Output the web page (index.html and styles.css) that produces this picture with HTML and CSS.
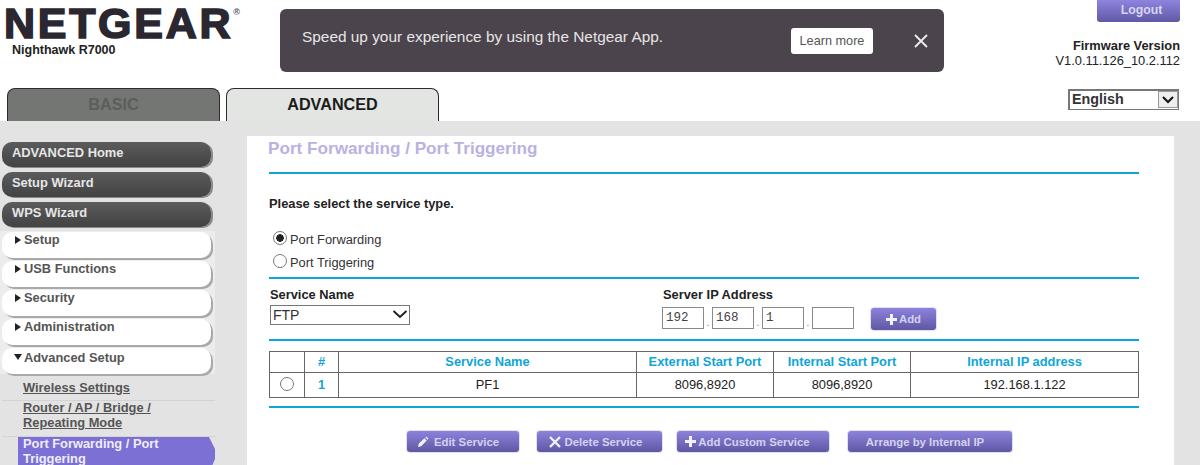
FILE: index.html
```html
<!DOCTYPE html>
<html lang="en">
<head>
<meta charset="utf-8">
<title>NETGEAR Router R7000</title>
<link rel="stylesheet" href="styles.css">
</head>
<body>
<header class="header">
  <div class="header-left">
    <div class="header-top">
      <div class="brand">
        <div class="logo">NETGEAR<span class="reg">®</span></div>
        <div class="model">Nighthawk R7000</div>
      </div>
      <div class="banner">
        <span class="banner-text">Speed up your experience by using the Netgear App.</span>
        <a class="learn">Learn more</a>
        <svg class="banner-x" width="14" height="14" viewBox="0 0 14 14"><path d="M1 1 13 13M13 1 1 13" stroke="#eeeeee" stroke-width="1.8" fill="none"/></svg>
      </div>
    </div>
    <nav class="tabs">
      <a class="tab tab-basic">BASIC</a>
      <a class="tab tab-advanced">ADVANCED</a>
    </nav>
  </div>
  <div class="header-right">
    <a class="logout">Logout</a>
    <div class="firmware"><b>Firmware Version</b><br>V1.0.11.126_10.2.112</div>
    <div class="lang">
      <select class="lang-select"><option>English</option></select>
      <svg class="lang-arrow" width="20" height="17" viewBox="0 0 20 17"><rect x="0.5" y="0.5" width="19" height="16" fill="#eeeeee" stroke="#999999"/><path d="M5 6 10 11 15 6" stroke="#111111" stroke-width="2" fill="none"/></svg>
    </div>
  </div>
</header>
<div class="shell">
  <aside class="sidebar">
    <a class="pill pill-dark">ADVANCED Home</a>
    <a class="pill pill-dark">Setup Wizard</a>
    <a class="pill pill-dark">WPS Wizard</a>
    <div class="light-group">
      <a class="pill pill-light"><i class="tri"></i>Setup</a>
      <a class="pill pill-light"><i class="tri"></i>USB Functions</a>
      <a class="pill pill-light"><i class="tri"></i>Security</a>
      <a class="pill pill-light"><i class="tri"></i>Administration</a>
      <a class="pill pill-light pill-open"><i class="tri tri-down"></i>Advanced Setup</a>
    </div>
    <a class="sub sub-one">Wireless Settings</a>
    <a class="sub sub-two">Router / AP / Bridge / Repeating Mode</a>
    <a class="sub-active">Port Forwarding / Port Triggering</a>
  </aside>
  <main class="panel">
    <h1 class="title">Port Forwarding / Port Triggering</h1>
    <div class="rule"></div>
    <p class="prompt">Please select the service type.</p>
    <label class="radio-row"><input class="radio" type="radio" name="t" checked>Port Forwarding</label>
    <label class="radio-row"><input class="radio" type="radio" name="t">Port Triggering</label>
    <div class="rule rule-b"></div>
    <div class="form-row">
      <div>
        <div class="field-label">Service Name</div>
        <div class="svc">
          <select class="svc-select"><option>FTP</option></select>
          <svg class="svc-arrow" width="16" height="9" viewBox="0 0 16 9"><path d="M1.5 1 8 7 14.5 1" stroke="#222222" stroke-width="2" fill="none"/></svg>
        </div>
      </div>
      <div>
        <div class="field-label">Server IP Address</div>
        <div class="ip-row">
          <input class="ip" value="192"><span class="dot">.</span>
          <input class="ip" value="168"><span class="dot">.</span>
          <input class="ip" value="1"><span class="dot">.</span>
          <input class="ip" value="">
          <a class="btn btn-add"><svg width="11" height="11" viewBox="0 0 11 11"><path d="M5.500 0v11M0 5.500h11" stroke="#f2f0fb" stroke-width="3"/></svg>Add</a>
        </div>
      </div>
    </div>
    <div class="rule rule-c"></div>
    <table class="grid">
      <colgroup>
        <col class="c1"><col class="c2"><col class="c3"><col class="c4"><col class="c5"><col>
      </colgroup>
      <tr class="head"><th></th><th>#</th><th>Service Name</th><th>External Start Port</th><th>Internal Start Port</th><th>Internal IP address</th></tr>
      <tr class="row"><td><input class="radio radio-table" type="radio" name="r"></td><td class="num">1</td><td>PF1</td><td>8096,8920</td><td>8096,8920</td><td>192.168.1.122</td></tr>
    </table>
    <div class="rule rule-d"></div>
    <div class="actions">
      <a class="btn btn-edit"><svg width="12" height="12" viewBox="0 0 13 13"><path d="M1 12 2 8 8 2.500 10.500 5 4.500 11ZM9 1.500 10 .5 12.500 3 11.500 4Z" fill="#f2f0fb"/></svg>Edit Service</a>
      <a class="btn btn-del"><svg width="12" height="12" viewBox="0 0 12 12"><path d="M1 1 11 11M11 1 1 11" stroke="#f2f0fb" stroke-width="2.400"/></svg>Delete Service</a>
      <a class="btn btn-custom"><svg width="11" height="11" viewBox="0 0 11 11"><path d="M5.500 0v11M0 5.500h11" stroke="#f2f0fb" stroke-width="3"/></svg>Add Custom Service</a>
      <a class="btn btn-arrange">Arrange by Internal IP</a>
    </div>
  </main>
</div>
</body>
</html>
```
FILE: styles.css
```css
* { box-sizing: border-box; }
html, body { margin: 0; padding: 0; }
body {
  width: 1200px;
  height: 465px;
  overflow: hidden;
  background: #e3e3e3;
  font-family: "Liberation Sans", Arial, sans-serif;
  font-size: 12.85px;
  color: #222;
}
a { display: block; }

.header {
  display: flex;
  height: 121px;
  background: #fff;
}
.header-left { width: 1040px; }
.header-top { display: flex; height: 88px; }
.brand { width: 280px; padding-left: 4px; }
.logo {
  font-size: 43px;
  font-weight: 700;
  line-height: 44px;
  margin-top: 1px;
  letter-spacing: 2.7px;
  color: #2b2730;
  -webkit-text-stroke: 1.6px #2b2730;
  white-space: nowrap;
}
.reg {
  font-size: 9px;
  letter-spacing: 0;
  -webkit-text-stroke: 0;
  vertical-align: 23px;
  color: #555;
  line-height: 0;
}
.model {
  margin: -2px 0 0 8px;
  font-size: 12.5px;
  font-weight: 700;
  line-height: 14px;
  color: #222;
}
.banner {
  display: flex;
  align-items: center;
  width: 664px;
  height: 63px;
  margin-top: 9px;
  padding: 0 16px 0 22px;
  background: #4b444c;
  border-radius: 6px;
}
.banner-text { width: 489px; font-size: 15.4px; color: #e6e6e6; padding-bottom: 7px; }
.learn {
  width: 82px;
  height: 26px;
  background: #fff;
  border-radius: 3px;
  font-size: 12.7px;
  line-height: 26px;
  text-align: center;
  color: #555;
}
.banner-x { margin-left: 41px; }

.tabs { display: flex; gap: 6px; padding-left: 7px; height: 33px; }
.tab {
  width: 213px;
  height: 33px;
  border: 1px solid #2c2c2c;
  border-bottom: 0;
  border-radius: 8px 8px 0 0;
  font-size: 16.2px;
  font-weight: 700;
  line-height: 31px;
  text-align: center;
}
.tab-basic { background: #747673; color: #5c5e5c; }
.tab-advanced { background: #e3e5e3; color: #1c1c1c; }

.header-right {
  display: flex;
  flex-direction: column;
  align-items: flex-end;
  width: 140px;
}
.logout {
  width: 83px;
  height: 22px;
  padding-left: 6px;
  border-radius: 0 0 3px 3px;
  background: linear-gradient(#8f84df, #5f58a4);
  color: #d9d5f2;
  font-size: 12.3px;
  font-weight: 700;
  line-height: 20px;
  text-align: center;
}
.firmware {
  margin-top: 16px;
  font-size: 12.85px;
  line-height: 15px;
  text-align: right;
  color: #222;
  white-space: nowrap;
}
.lang { position: relative; width: 111px; height: 21px; margin-top: 21px; margin-right: 1px; }
.lang-select {
  appearance: none;
  width: 100%;
  height: 100%;
  padding: 0 0 2px 2px;
  border: 1px solid #777;
  border-top-width: 2px;
  border-left-width: 2px;
  border-radius: 0;
  background: #fff;
  font: 700 14.3px "Liberation Sans", Arial, sans-serif;
  color: #333;
}
.lang-arrow { position: absolute; right: 1px; top: 2px; }

.shell { display: flex; height: 344px; overflow: hidden; }
.sidebar { width: 215px; padding-top: 21px; flex: none; }
.pill {
  margin-left: 2px;
  width: 209px;
  border-radius: 10px;
  font-weight: 700;
}
.pill-dark {
  height: 25px;
  margin-bottom: 5px;
  padding-left: 10px;
  background: linear-gradient(#5c5c5c, #4c4c4c 60%, #434343);
  box-shadow: 2px 1px 0 #8a8a8a;
  color: #e6e6e6;
  font-size: 12.9px;
  line-height: 21px;
}
.light-group { background: #ececec; margin-top: -1px; padding-top: 1px; }
.pill-light {
  height: 26px;
  margin-bottom: 3px;
  padding-left: 13px;
  background: #fff;
  box-shadow: 2px 2px 0 #a9a9a9;
  color: #555;
  line-height: 16px;
}
.pill-open { margin-bottom: 0; padding-left: 12px; line-height: 20px; }
.tri {
  display: inline-block;
  width: 0;
  height: 0;
  margin-right: 3px;
  border-left: 6px solid #222;
  border-top: 4px solid transparent;
  border-bottom: 4px solid transparent;
  vertical-align: 0;
}
.tri-down {
  border-left: 4px solid transparent;
  border-right: 4px solid transparent;
  border-top: 6px solid #222;
  border-bottom: 0;
  margin-right: 2px;
  vertical-align: 2px;
}
.sub {
  margin-left: 2px;
  padding: 0 50px 5px 21px;
  border-bottom: 1px solid #d3d3d3;
  font-weight: 700;
  line-height: 15px;
  color: #555;
  text-decoration: underline;
}
.sub-one { padding-top: 6px; padding-bottom: 4px; height: 27px; }
.sub-two { margin-top: -1px; padding-bottom: 6px; }
.sub-active {
  margin-left: 18px;
  width: 197px;
  height: 29px;
  padding: 0 20px 0 5px;
  background: #7c70d4;
  clip-path: polygon(0 0, 191px 0, 197px 12px, 197px 22px, 194px 29px, 0 29px);
  color: #efedfb;
  font-weight: 700;
  line-height: 14.5px;
}

.panel {
  width: 927px;
  height: 329px;
  margin: 15px 0 0 32px;
  padding: 0 35px 0 22px;
  background: #fff;
  flex: none;
}
.title {
  margin: 0;
  height: 36px;
  font-size: 17.15px;
  font-weight: 700;
  line-height: 25px;
  color: #b9b2e2;
  margin-left: -1px;
}
.rule { height: 2px; background: #10a5d9; }
.prompt {
  margin: 22px 0 16px;
  font-weight: 700;
  line-height: 16px;
  color: #222;
}
.radio-row {
  display: flex;
  align-items: center;
  height: 23px;
  padding-left: 4px;
  color: #333;
}
.radio {
  appearance: none;
  width: 14px;
  height: 14px;
  margin: 0 3px 3px 0;
  border: 1px solid #777;
  border-radius: 50%;
  background: #fff;
}
.radio:checked { background: radial-gradient(circle, #222 3.5px, #fff 4px); }
.rule-b { margin-top: 3px; }
.form-row { display: grid; grid-template-columns: 393px 1fr; padding-left: 1px; }
.field-label {
  margin-top: 9px;
  font-weight: 700;
  line-height: 14px;
  color: #222;
}
.svc { position: relative; width: 140px; height: 20px; margin-top: 3px; }
.svc-select {
  appearance: none;
  width: 100%;
  height: 100%;
  padding: 0 0 0 2px;
  border: 1px solid #777;
  border-radius: 0;
  background: #fff;
  font: 14px "Liberation Sans", Arial, sans-serif;
  color: #333;
}
.svc-arrow { position: absolute; right: 2px; top: 5px; }
.ip-row { display: flex; align-items: flex-start; margin-top: 5px; height: 23px; margin-left: -1px; }
.ip {
  width: 42px;
  height: 22px;
  padding: 0 3px;
  border: 1px solid #8a8a8a;
  font: 12.5px "Liberation Mono", monospace;
  color: #444;
  background: #fff;
}
.dot { width: 8px; padding-top: 10px; font-size: 10px; line-height: 12px; color: #777; text-align: center; }
.btn {
  display: flex;
  align-items: center;
  justify-content: center;
  gap: 2px;
  height: 21px;
  border-radius: 3px;
  background: linear-gradient(#8d82dc, #5f58a3);
  box-shadow: 0 0 0 1px #e2dff3;
  color: #d5d1ef;
  font-size: 11.4px;
  font-weight: 700;
  white-space: nowrap;
}
.btn-add { width: 65px; height: 22px; margin: 1px 0 0 17px; }
.rule-c { margin-top: 9px; }
.grid {
  width: 870px;
  margin-top: 10px;
  border-collapse: collapse;
  table-layout: fixed;
  border: 1px solid #999;
}
.c1 { width: 35px; }
.c2 { width: 34px; }
.c3 { width: 298px; }
.c4 { width: 137px; }
.c5 { width: 137px; }
.grid th, .grid td { padding: 0; border: 1px solid #666; text-align: center; }
.head th { height: 21px; font-size: 12.85px; font-weight: 700; color: #10a5d9; padding-bottom: 2px; }
.row td { height: 25px; padding-bottom: 2px; font-size: 12.85px; color: #222; }
.grid .num { color: #10a5d9; font-weight: 700; }
.radio-table { display: block; margin: 0 auto; }
.rule-d { margin-top: 8px; }
.actions { display: flex; padding: 23px 0 0 138px; }
.btn-edit { width: 112px; gap: 5px; padding-right: 10px; }
.btn-del { width: 125px; margin-left: 18px; gap: 4px; padding-right: 8px; }
.btn-custom { width: 152px; margin-left: 15px; padding-right: 11px; }
.btn-arrange { width: 164px; margin-left: 19px; padding-right: 10px; }
```
